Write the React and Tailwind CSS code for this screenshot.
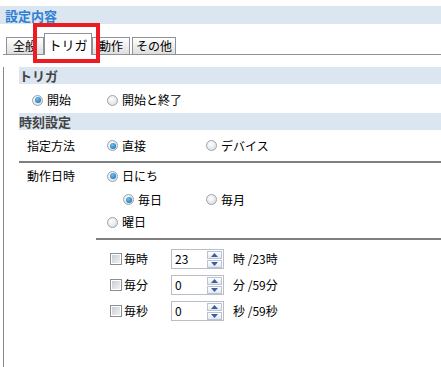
import React from "react";

const F = { fontFamily: '"Noto Sans CJK JP", "Noto Sans", sans-serif' };

function Radio({ on }) {
  return (
    <span className="relative inline-flex h-[11px] w-[11px] shrink-0 items-center justify-center rounded-full border border-[#9aa3ad] bg-[radial-gradient(circle_at_40%_35%,#ffffff,#d4d8dc)]">
      {on && (
        <span className="h-[6px] w-[6px] rounded-full bg-[radial-gradient(circle_at_40%_35%,#6fc3f2,#0b5fa8)]" />
      )}
    </span>
  );
}

function Check() {
  return (
    <span className="inline-block h-[12px] w-[12px] shrink-0 border border-[#8a8f96] bg-white p-[1px]">
      <span className="block h-full w-full bg-[linear-gradient(135deg,#c9ccd0,#f1f2f3)]" />
    </span>
  );
}

function RadioLabel({ on, children, className = "" }) {
  return (
    <span className={"flex items-center gap-[4px] " + className}>
      <Radio on={on} />
      <span>{children}</span>
    </span>
  );
}

function Tab({ children, w }) {
  return (
    <div
      className={
        "flex h-[17px] items-center justify-center border border-b-0 border-[#8f9399] bg-[linear-gradient(#ffffff,#dedede)] text-[12px] leading-none " +
        w
      }
    >
      {children}
    </div>
  );
}

function Spin({ value }) {
  return (
    <div className="flex h-[20px] w-[53px] items-center justify-between border border-[#b9bec4] bg-white pl-[3px] pr-[1px]">
      <span className="text-[12px] leading-none">{value}</span>
      <div className="flex flex-col gap-[1px]">
        <span className="flex h-[8px] w-[15px] items-center justify-center border border-[#b8c3d6] bg-[linear-gradient(#ffffff,#e3e8f1)]">
          <svg width="7" height="4" viewBox="0 0 7 4"><path d="M3.5 0L7 4H0Z" fill="#3b5e9c" /></svg>
        </span>
        <span className="flex h-[8px] w-[15px] items-center justify-center border border-[#b8c3d6] bg-[linear-gradient(#ffffff,#e3e8f1)]">
          <svg width="7" height="4" viewBox="0 0 7 4"><path d="M0 0H7L3.5 4Z" fill="#3b5e9c" /></svg>
        </span>
      </div>
    </div>
  );
}

function CheckRow({ label, value, unit }) {
  return (
    <div className="flex h-[26px] items-center">
      <span className="ml-[110px] flex w-[61px] items-center gap-[2px]">
        <Check />
        <span>{label}</span>
      </span>
      <Spin value={value} />
      <span className="ml-[9px]">{unit}</span>
    </div>
  );
}

export default function App() {
  return (
    <div
      className="relative h-[367px] w-[441px] overflow-hidden bg-white text-[12px] leading-none text-black"
      style={F}
    >
      {/* header */}
      <div className="mt-[6px] flex h-[18px] items-center bg-[#dce6f0] pl-[5px] text-[13px] font-bold text-[#2f7fd4]">
        設定内容
      </div>

      {/* tabs */}
      <div className="ml-[3px] flex h-[31px] items-end border-b border-[#8f9399] pl-[3px]">
        <Tab w="w-[38px]">全般</Tab>
        <div className="mb-[-1px] flex h-[22px] w-[48px] items-center justify-center border border-b-0 border-[#8f9399] bg-white text-[13px] leading-none">
          トリガ
        </div>
        <Tab w="w-[38px]">動作</Tab>
        <div className="w-[2px]" />
        <Tab w="w-[44px]">その他</Tab>
      </div>

      {/* panel */}
      <div className="ml-[3px] h-[312px] border-l border-[#8a8a8a] pl-[15px]">
        <div className="mt-[12px] flex h-[17px] items-center bg-[#dce6f0] text-[13px] font-bold text-[#444]">
          トリガ
        </div>
        <div className="flex h-[29px] items-center pt-[3px]">
          <RadioLabel on className="ml-[13px] w-[75px]">開始</RadioLabel>
          <RadioLabel>開始と終了</RadioLabel>
        </div>

        <div className="flex h-[17px] items-center bg-[#dce6f0] text-[13px] font-bold text-[#444]">
          時刻設定
        </div>
        <div className="flex h-[31px] items-center">
          <span className="ml-[8px] w-[80px]">指定方法</span>
          <RadioLabel on className="w-[99px]">直接</RadioLabel>
          <RadioLabel>デバイス</RadioLabel>
        </div>
        <div className="h-[2px] bg-[#7f7f7f]" />

        <div className="flex h-[26px] items-center">
          <span className="ml-[8px] w-[80px]">動作日時</span>
          <RadioLabel on>日にち</RadioLabel>
        </div>
        <div className="flex h-[21px] items-center">
          <RadioLabel on className="ml-[104px] w-[83px]">毎日</RadioLabel>
          <RadioLabel>毎月</RadioLabel>
        </div>
        <div className="flex h-[24px] items-center">
          <RadioLabel className="ml-[88px]">曜日</RadioLabel>
        </div>
        <div className="ml-[77px] mt-[4px] h-[2px] bg-[#7f7f7f]" />

        <div className="mt-[6px] -ml-[19px]">
          <CheckRow label="毎時" value="23" unit="時 /23時" />
          <CheckRow label="毎分" value="0" unit="分 /59分" />
          <CheckRow label="毎秒" value="0" unit="秒 /59秒" />
        </div>
      </div>

      {/* red annotation box */}
      <div className="pointer-events-none absolute left-[33px] top-[23px] h-[40px] w-[67px] border-[4px] border-[#ed1c24]" />
    </div>
  );
}
